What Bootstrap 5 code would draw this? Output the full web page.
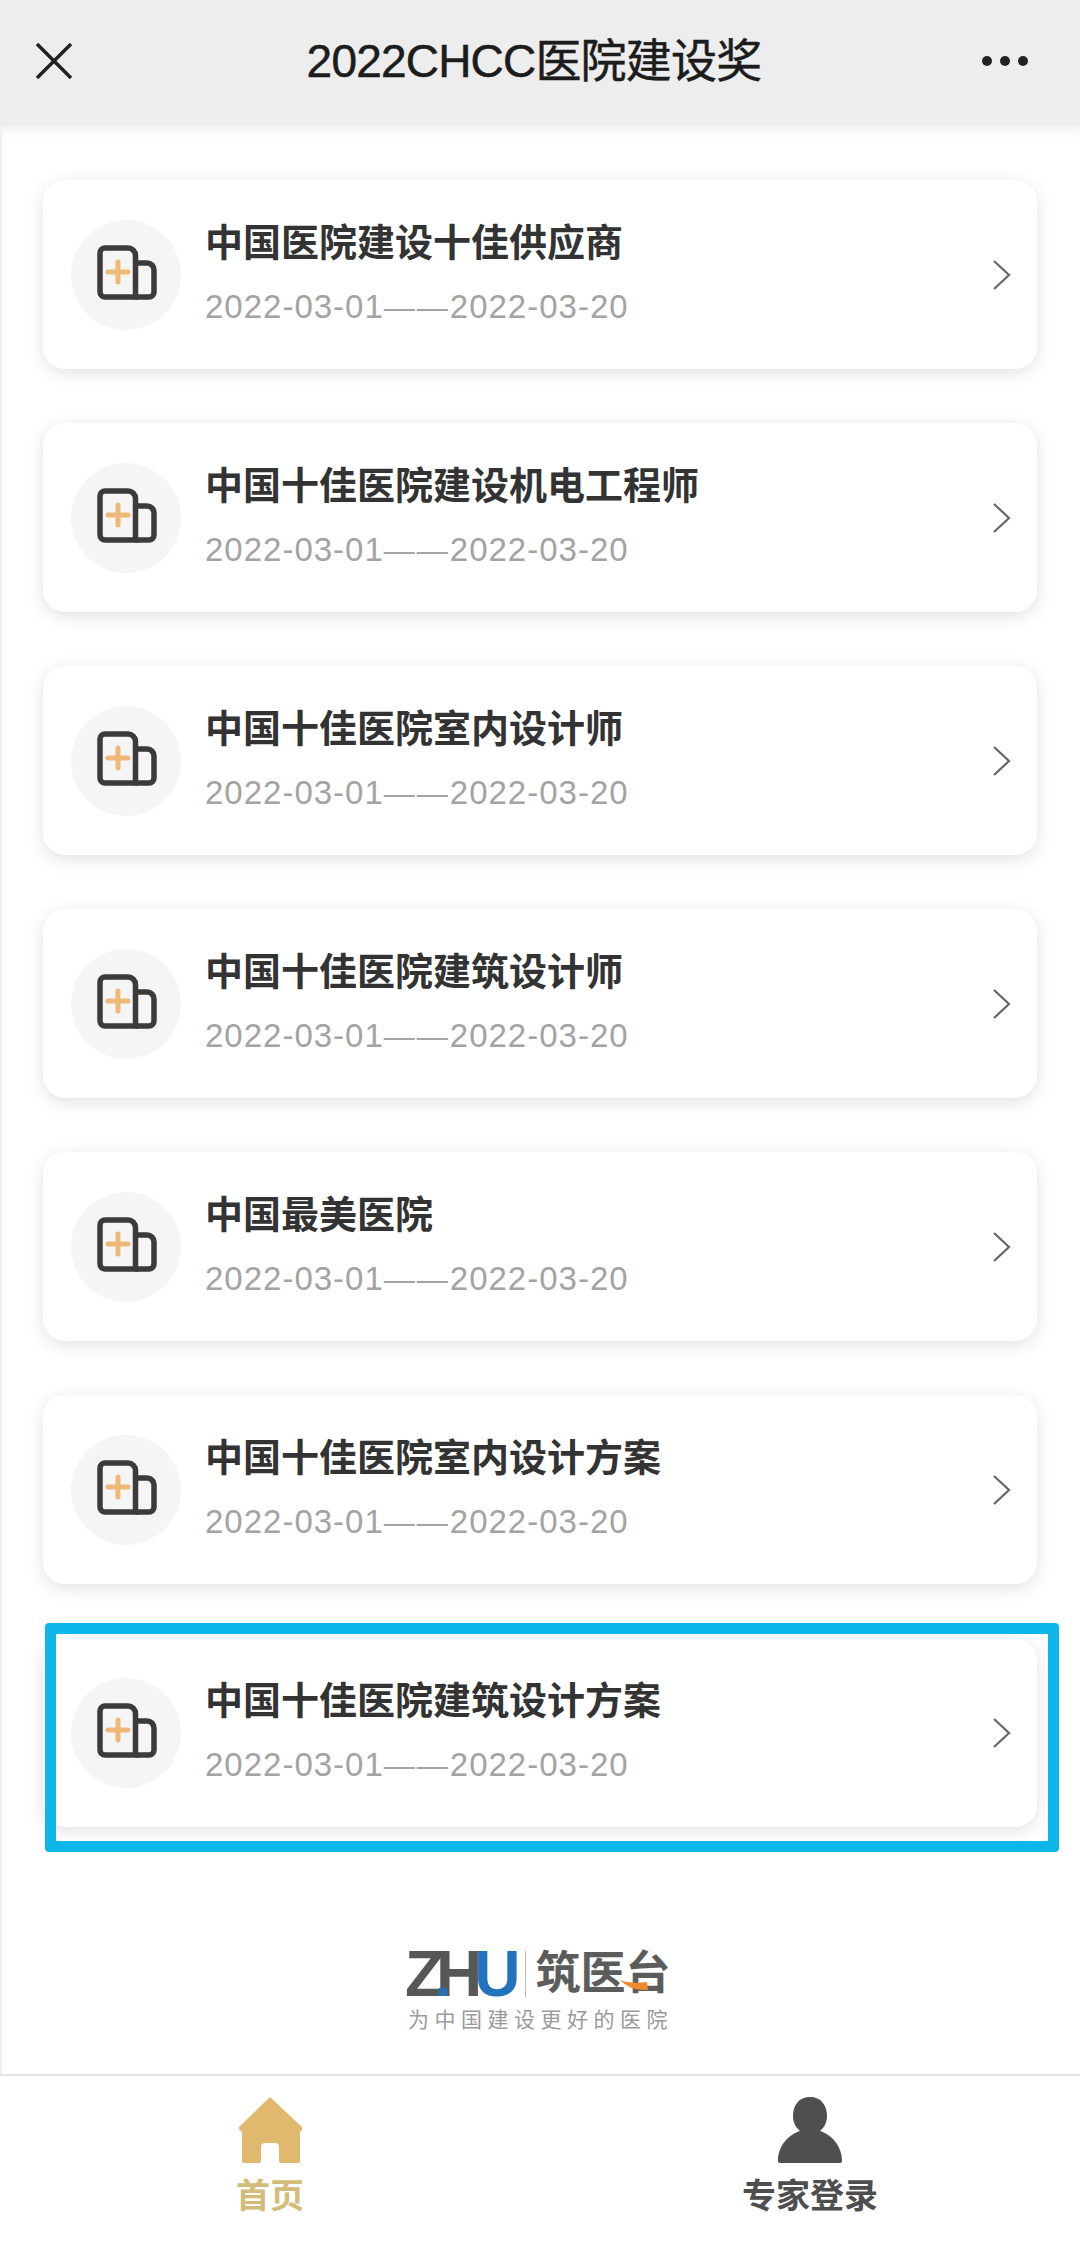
<!DOCTYPE html>
<html>
<head>
  <meta charset="UTF-8">
  <title>2022CHCC医院建设奖</title>
  <meta name="viewport" content="width=device-width, initial-scale=1.0">
  <link href="https://cdn.jsdelivr.net/npm/bootstrap@5.3.0/dist/css/bootstrap.min.css" rel="stylesheet">
  <style>
    body {
      width: 1080px;
      height: 2246px;
      overflow: hidden;
      font-family: "Liberation Sans", "Noto Sans CJK SC", sans-serif;
      background: #fff;
    }
    .top-bar {
      height: 126px;
      background: #ededed;
      padding: 0 36px 4px;
    }
    .top-title {
      font-size: 46px;
      line-height: 56px;
      margin-left: 14px;
      color: #1c1c1c;
      -webkit-text-stroke: 0.5px #1c1c1c;
      letter-spacing: -0.8px;
    }
    .page-main {
      min-height: 0;
      border-left: 2px solid #f0f0f0;
      padding: 54px 43px 0 41px;
      gap: 54px;
      box-shadow: inset 0 14px 14px -10px rgba(0, 0, 0, .07);
    }
    .award-item {
      height: 189px;
      padding-left: 28px;
      padding-right: 25px;
      border-radius: 22px;
      box-shadow: 0 4px 18px rgba(0, 0, 0, .12);
    }
    .icon-disc {
      width: 110px;
      height: 110px;
      background: #f6f5f5;
    }
    .award-text {
      margin-left: 24px;
      padding-bottom: 4px;
    }
    .award-title {
      font-size: 38px;
      line-height: 48px;
      font-weight: 700;
      color: #333;
      margin-bottom: 21px;
    }
    .award-date {
      font-size: 33px;
      line-height: 38px;
      letter-spacing: 1px;
      color: #a3a3a3;
    }
    .date-dash {
      font-size: 31px;
      letter-spacing: 2px;
    }
    .mark-box {
      top: -15px;
      left: 2px;
      width: 1014px;
      height: 229px;
      border: 11px solid #0db7ea;
      border-radius: 4px;
    }
    .logo-block {
      margin-top: 68px;
      width: 270px;
    }
    .logo-line {
      height: 50px;
      line-height: 50px;
      white-space: nowrap;
    }
    .logo-latin {
      font-size: 64px;
      font-weight: 700;
      letter-spacing: -8px;
      color: #575757;
    }
    .logo-dot {
      width: 8px;
      height: 8px;
      left: 34px;
      bottom: 3px;
      background: #2272bd;
    }
    .logo-u {
      color: #2272bd;
    }
    .logo-sep {
      width: 1px;
      height: 46px;
      margin: 0 10px 0 12px;
      background: #bbb;
    }
    .logo-cn {
      font-size: 45px;
      font-weight: 700;
      color: #5c5c5c;
    }
    .logo-swoosh {
      left: 215px;
      top: 30px;
    }
    .logo-slogan {
      margin-top: 8px;
      margin-left: 3px;
      font-size: 21px;
      line-height: 26px;
      letter-spacing: 5.500px;
      color: #9a9a9a;
      white-space: nowrap;
    }
    .tab-bar {
      height: 172px;
      border-top: 2px solid #e4e4e4;
      padding-top: 21px;
    }
    .tab-label {
      font-size: 34px;
      line-height: 40px;
      font-weight: 700;
      margin-top: 13px;
    }
    .tab-home {
      color: #d3bb78;
    }
    .tab-expert {
      color: #4e4e4e;
    }
  </style>
</head>
<body class="d-flex flex-column">
  <svg width="0" height="0" class="position-absolute">
    <symbol id="ward" viewBox="0 0 110 110">
      <path d="M34 28h23a7.500 7.500 0 0 1 7.500 7.500V77H34a5 5 0 0 1-5-5V33a5 5 0 0 1 5-5z" fill="none" stroke="#3c3a3a" stroke-width="5.500"/>
      <path d="M64.500 43H76a7 7 0 0 1 7 7v22a5 5 0 0 1-5 5H64" fill="none" stroke="#3c3a3a" stroke-width="5.500"/>
      <path d="M37 52h20M47 42v20" fill="none" stroke="#eeb877" stroke-width="5" stroke-linecap="round"/>
    </symbol>
    <symbol id="arrow" viewBox="0 0 20 32">
      <path d="M2 2l15 14L2 30" fill="none" stroke="#666" stroke-width="2.200"/>
    </symbol>
  </svg>

  <header class="top-bar d-flex align-items-center justify-content-between flex-shrink-0">
    <svg width="36" height="36" viewBox="0 0 36 36"><path d="M1 1l34 34M35 1L1 35" fill="none" stroke="#222" stroke-width="3.500"/></svg>
    <div class="top-title">2022CHCC医院建设奖</div>
    <svg width="46" height="10" viewBox="0 0 46 10" class="me-3"><circle cx="5" cy="5" r="5" fill="#222"/><circle cx="23" cy="5" r="5" fill="#222"/><circle cx="41" cy="5" r="5" fill="#222"/></svg>
  </header>

  <main class="page-main flex-grow-1 d-flex flex-column">
    <div class="award-item bg-white d-flex align-items-center flex-shrink-0">
      <div class="icon-disc rounded-circle flex-shrink-0"><svg width="110" height="110"><use href="#ward"/></svg></div>
      <div class="award-text flex-grow-1">
        <div class="award-title">中国医院建设十佳供应商</div>
        <div class="award-date">2022-03-01<span class="date-dash">——</span>2022-03-20</div>
      </div>
      <svg width="20" height="32"><use href="#arrow"/></svg>
    </div>
    <div class="award-item bg-white d-flex align-items-center flex-shrink-0">
      <div class="icon-disc rounded-circle flex-shrink-0"><svg width="110" height="110"><use href="#ward"/></svg></div>
      <div class="award-text flex-grow-1">
        <div class="award-title">中国十佳医院建设机电工程师</div>
        <div class="award-date">2022-03-01<span class="date-dash">——</span>2022-03-20</div>
      </div>
      <svg width="20" height="32"><use href="#arrow"/></svg>
    </div>
    <div class="award-item bg-white d-flex align-items-center flex-shrink-0">
      <div class="icon-disc rounded-circle flex-shrink-0"><svg width="110" height="110"><use href="#ward"/></svg></div>
      <div class="award-text flex-grow-1">
        <div class="award-title">中国十佳医院室内设计师</div>
        <div class="award-date">2022-03-01<span class="date-dash">——</span>2022-03-20</div>
      </div>
      <svg width="20" height="32"><use href="#arrow"/></svg>
    </div>
    <div class="award-item bg-white d-flex align-items-center flex-shrink-0">
      <div class="icon-disc rounded-circle flex-shrink-0"><svg width="110" height="110"><use href="#ward"/></svg></div>
      <div class="award-text flex-grow-1">
        <div class="award-title">中国十佳医院建筑设计师</div>
        <div class="award-date">2022-03-01<span class="date-dash">——</span>2022-03-20</div>
      </div>
      <svg width="20" height="32"><use href="#arrow"/></svg>
    </div>
    <div class="award-item bg-white d-flex align-items-center flex-shrink-0">
      <div class="icon-disc rounded-circle flex-shrink-0"><svg width="110" height="110"><use href="#ward"/></svg></div>
      <div class="award-text flex-grow-1">
        <div class="award-title">中国最美医院</div>
        <div class="award-date">2022-03-01<span class="date-dash">——</span>2022-03-20</div>
      </div>
      <svg width="20" height="32"><use href="#arrow"/></svg>
    </div>
    <div class="award-item bg-white d-flex align-items-center flex-shrink-0">
      <div class="icon-disc rounded-circle flex-shrink-0"><svg width="110" height="110"><use href="#ward"/></svg></div>
      <div class="award-text flex-grow-1">
        <div class="award-title">中国十佳医院室内设计方案</div>
        <div class="award-date">2022-03-01<span class="date-dash">——</span>2022-03-20</div>
      </div>
      <svg width="20" height="32"><use href="#arrow"/></svg>
    </div>
    <div class="award-item bg-white d-flex align-items-center flex-shrink-0 position-relative">
      <div class="icon-disc rounded-circle flex-shrink-0"><svg width="110" height="110"><use href="#ward"/></svg></div>
      <div class="award-text flex-grow-1">
        <div class="award-title">中国十佳医院建筑设计方案</div>
        <div class="award-date">2022-03-01<span class="date-dash">——</span>2022-03-20</div>
      </div>
      <svg width="20" height="32"><use href="#arrow"/></svg>
      <div class="mark-box position-absolute"></div>
    </div>

    <div class="logo-block align-self-center position-relative">
      <div class="logo-line d-flex align-items-center position-relative">
        <span class="logo-latin flex-shrink-0">ZH<span class="logo-u">U</span></span>
        <span class="logo-dot position-absolute"></span>
        <span class="logo-sep flex-shrink-0"></span>
        <span class="logo-cn flex-shrink-0">筑医台</span>
      </div>
      <svg class="logo-swoosh position-absolute" width="28" height="12" viewBox="0 0 28 12"><path d="M0 1q10 4 27 2l1 8q-18 1-28-10z" fill="#ee8a2c"/></svg>
      <div class="logo-slogan">为中国建设更好的医院</div>
    </div>
  </main>

  <footer class="tab-bar d-flex flex-shrink-0">
    <div class="w-50 d-flex flex-column align-items-center tab-home">
      <svg width="66" height="66" viewBox="0 0 66 66"><path d="M33 0l32 30q1 3-2 5v29q0 2-2 2H44q-2 0-2-2V50q0-4-4-4h-9q-5 0-5 4v14q0 2-2 2H7q-2 0-2-2V35q-4-2-3-5z" fill="#e0b96f"/></svg>
      <div class="tab-label">首页</div>
    </div>
    <div class="w-50 d-flex flex-column align-items-center tab-expert">
      <svg width="66" height="66" viewBox="0 0 66 66"><path d="M33 0c11 0 17 8 17 19 0 9-5 13-7 15 12 4 22 15 22 30q0 2-2 2H3q-2 0-2-2c0-15 10-26 22-30-2-2-7-6-7-15C16 8 22 0 33 0z" fill="#4f4f4f"/></svg>
      <div class="tab-label">专家登录</div>
    </div>
  </footer>
</body>
</html>
